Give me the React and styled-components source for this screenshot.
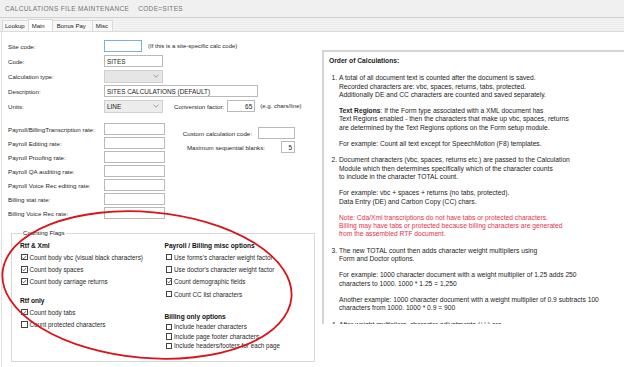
import { Fragment } from 'react';
import styled, { createGlobalStyle } from 'styled-components';

const GlobalStyle = createGlobalStyle`
  html, body {
    margin: 0;
    padding: 0;
    background: #ffffff;
  }
  body {
    font-family: "Liberation Sans", Arial, sans-serif;
    color: #1f1f1f;
  }
`

const Page = styled.div`
  position: relative;
  width: 624px;
  height: 367px;
  overflow: hidden;
  background: #ffffff;
`

const TitleBar = styled.div`
  display: flex;
  align-items: center;
  height: 17px;
  padding-left: 5px;
  background: #f0f0f0;
  border-bottom: 1px solid #d2d2d2;
  font-size: 6.5px;
  letter-spacing: 0.35px;
  color: #747474;
  text-transform: uppercase;
`

const TitleCode = styled.span`
  margin-left: 9px;
`

const TabStrip = styled.div`
  display: flex;
  align-items: flex-end;
  height: 13px;
  padding-left: 2px;
  background: repeating-linear-gradient(#ececec 0 1px, #f4f4f4 1px 2px);
  border-bottom: 1px solid #dcdcdc;
`

const Tab = styled.div`
  display: flex;
  align-items: center;
  height: ${p => (p.$active ? '11px' : '10px')};
  padding: 0 ${p => p.$pr}px 0 ${p => p.$pl}px;
  font-size: 6px;
  color: #222;
  background: ${p => (p.$active ? '#ffffff' : '#f7f7f7')};
  border: 1px solid #dadada;
  border-bottom: none;
  margin-right: -1px;
`

const Body = styled.div`
  display: flex;
  align-items: flex-start;
  margin-left: 1px;
  border-left: 1px solid #e2e2e2;
  height: 335px;
`

const LeftCol = styled.div`
  width: 308px;
  padding: 8px 0 0 6px;
  display: flex;
  flex-direction: column;
`

const FormGrid = styled.div`
  display: grid;
  grid-template-columns: 96px 1fr;
  grid-auto-rows: 12px;
  row-gap: 3px;
  align-items: center;
`

const Label = styled.label`
  font-size: 6.2px;
  color: #1f1f1f;
  white-space: nowrap;
  margin-left: ${p => p.$ml || 0}px;
`

const Controls = styled.div`
  display: flex;
  align-items: center;
  height: 12px;
`

const Input = styled.div`
  box-sizing: border-box;
  width: ${p => p.$w}px;
  height: 12px;
  margin-left: ${p => p.$ml || 0}px;
  border: 1px solid ${p => (p.$focus ? '#7aaee3' : '#b9b9b9')};
  background: #ffffff;
  font-size: 6.4px;
  color: #1b1b1b;
  display: flex;
  align-items: center;
  justify-content: ${p => (p.$right ? 'flex-end' : 'flex-start')};
  padding: 0 2px;
`

const Select = styled.div`
  box-sizing: border-box;
  width: ${p => p.$w}px;
  height: 13px;
  border: 1px solid #cfcfcf;
  background: ${p => (p.$disabled ? '#e6e6e6' : '#ececec')};
  font-size: 6.4px;
  color: #1b1b1b;
  display: flex;
  align-items: center;
  justify-content: space-between;
  padding: 0 3px 0 2px;
`

const Note = styled.span`
  font-size: 6px;
  color: #2a2a2a;
  margin-left: ${p => p.$ml}px;
  white-space: nowrap;
`

const Chevron = () => (
  <svg width="6" height="4" viewBox="0 0 6 4">
    <path d="M0.5 0.8 L3 3.2 L5.5 0.8" fill="none" stroke="#8a8a8a" strokeWidth="0.8" />
  </svg>
)

const PayrollSection = styled.div`
  display: flex;
  margin-top: 11px;
`

const PayrollGrid = styled(FormGrid)`
  row-gap: 2px;
`

const ExtraCol = styled.div`
  display: flex;
  flex-direction: column;
  align-items: flex-end;
  gap: 2px;
  width: 130px;
  margin-top: 4px;
`

const ExtraRow = styled.div`
  display: flex;
  align-items: center;
  height: 12px;
  gap: ${p => p.$gap}px;
`

const GroupBox = styled.fieldset`
  box-sizing: border-box;
  width: 304px;
  height: 133px;
  margin: 10px 0 0 3px;
  padding: 4px 0 0 8px;
  border: 1px solid #d8d8d8;
  display: flex;
  min-width: 0;
`

const Legend = styled.legend`
  font-size: 6.2px;
  line-height: 8px;
  padding: 0 1px;
  margin-left: 2px;
  color: #222;
`

const FlagCol = styled.div`
  display: flex;
  flex-direction: column;
  width: ${p => p.$w}px;
`

const FlagHeading = styled.div`
  font-size: 6.6px;
  font-weight: bold;
  height: 10px;
  line-height: 10px;
  margin-top: ${p => p.$mt || 0}px;
  color: #111;
  white-space: nowrap;
`

const FlagRow = styled.div`
  display: flex;
  align-items: center;
  height: ${p => p.$h}px;
  font-size: 6.3px;
  color: #1f1f1f;
  white-space: nowrap;
`

const Box = styled.span`
  box-sizing: border-box;
  width: 6.5px;
  height: 6.5px;
  border: 1px solid #444;
  background: #fff;
  margin: 0 2px 0 1px;
  display: flex;
  align-items: center;
  justify-content: center;
  flex-shrink: 0;
`

const Check = ({ on, h = 12.3, children }) => (
  <FlagRow $h={h}>
    <Box>
      {on && (
        <svg width="5" height="5" viewBox="0 0 5 5">
          <path d="M0.6 2.6 L1.9 3.9 L4.4 1" fill="none" stroke="#222" strokeWidth="0.8" />
        </svg>
      )}
    </Box>
    {children}
  </FlagRow>
)

const NotesPanel = styled.div`
  box-sizing: border-box;
  flex: 1;
  margin: 18px 0 0 6px;
  height: 274px;
  overflow: hidden;
  border-top: 2px solid #d4d4d4;
  border-left: 2px solid #d4d4d4;
  padding: 5px 0 0 5px;
  font-size: 6.7px;
  line-height: 8.3px;
  color: #1c1c1c;
  white-space: nowrap;
`

const NotesTitle = styled.div`
  font-weight: bold;
  margin-bottom: 9px;
`

const Steps = styled.ol`
  margin: 0;
  padding-left: 10px;
`

const Step = styled.li`
  margin-bottom: 8px;
`

const Para = styled.p`
  margin: 8px 0 0 0;
  color: ${p => (p.$red ? '#e5304d' : 'inherit')};
  &:first-child {
    margin-top: 0;
  }
`

const Overlay = styled.svg`
  position: absolute;
  left: 0;
  top: 0;
  pointer-events: none;
`

const formRows = [
  { label: 'Site code:', control: <><Input $w={38} $focus /><Note $ml={6}>(If this is a site-specific calc code)</Note></> },
  { label: 'Code:', control: <Input $w={59}>SITES</Input> },
  { label: 'Calculation type:', control: <Select $w={59} $disabled><span /><Chevron /></Select> },
  { label: 'Description:', control: <Input $w={154}>SITES CALCULATIONS (DEFAULT)</Input> },
  {
    label: 'Units:',
    control: (
      <>
        <Select $w={59}><span>LINE</span><Chevron /></Select>
        <Label $ml={11}>Conversion factor:</Label>
        <Input $w={28} $ml={3} $right>65</Input>
        <Note $ml={5}>(e.g. chars/line)</Note>
      </>
    ),
  },
]

const payrollRows = [
  'Payroll/BillingTranscription rate:',
  'Payroll Editing rate:',
  'Payroll Proofing rate:',
  'Payroll QA auditing rate:',
  'Payroll Voice Rec editing rate:',
  'Billing stat rate:',
  'Billing Voice Rec rate:',
]

export default function App() {
  return (
    <Page>
      <GlobalStyle />
      <TitleBar>
        Calculations File Maintenance
        <TitleCode>Code=SITES</TitleCode>
      </TitleBar>
      <TabStrip>
        <Tab $pl={2} $pr={3}>Lookup</Tab>
        <Tab $pl={3} $pr={7} $active>Main</Tab>
        <Tab $pl={4} $pr={6}>Bonus Pay</Tab>
        <Tab $pl={3} $pr={4}>Misc</Tab>
      </TabStrip>
      <Body>
        <LeftCol>
          <FormGrid>
            {formRows.map(r => (
              <Fragment key={r.label}>
                <Label>{r.label}</Label>
                <Controls>{r.control}</Controls>
              </Fragment>
            ))}
          </FormGrid>
          <PayrollSection>
            <PayrollGrid>
              {payrollRows.map(l => (
                <Fragment key={l}>
                  <Label>{l}</Label>
                  <Controls><Input $w={61} /></Controls>
                </Fragment>
              ))}
            </PayrollGrid>
            <ExtraCol>
              <ExtraRow $gap={6}>
                <Label>Custom calculation code:</Label>
                <Input $w={37} />
              </ExtraRow>
              <ExtraRow $gap={16}>
                <Label>Maximum sequential blanks:</Label>
                <Input $w={14} $right>5</Input>
              </ExtraRow>
            </ExtraCol>
          </PayrollSection>
          <GroupBox>
            <Legend>Counting Flags</Legend>
            <FlagCol $w={145}>
              <FlagHeading>Rtf &amp; Xml</FlagHeading>
              <Check on>Count body vbc (visual black characters)</Check>
              <Check on>Count body spaces</Check>
              <Check on>Count body carriage returns</Check>
              <FlagHeading $mt={8}>Rtf only</FlagHeading>
              <Check on>Count body tabs</Check>
              <Check>Count protected characters</Check>
            </FlagCol>
            <FlagCol $w={150}>
              <FlagHeading>Payroll / Billing misc options</FlagHeading>
              <Check>Use forms's character weight factor</Check>
              <Check>Use doctor's character weight factor</Check>
              <Check on>Count demographic fields</Check>
              <Check>Count CC list characters</Check>
              <FlagHeading $mt={12}>Billing only options</FlagHeading>
              <Check h={9.5}>Include header characters</Check>
              <Check h={9.5}>Include page footer characters</Check>
              <Check h={9.5}>Include headers/footers for each page</Check>
            </FlagCol>
          </GroupBox>
        </LeftCol>
        <NotesPanel>
          <NotesTitle>Order of Calculations:</NotesTitle>
          <Steps>
            <Step>
              <Para>
                A total of all document text is counted after the document is saved.<br />
                Recorded characters are: vbc, spaces, returns, tabs, protected.<br />
                Additionally DE and CC characters are counted and saved separately.
              </Para>
              <Para>
                <b>Text Regions</b>: If the Form type associated with a XML document has<br />
                Text Regions enabled - then the characters that make up vbc, spaces, returns<br />
                are determined by the Text Regions options on the Form setup module.
              </Para>
              <Para>For example: Count all text except for SpeechMotion (F8) templates.</Para>
            </Step>
            <Step>
              <Para>
                Document characters (vbc, spaces, returns etc.) are passed to the Calculation<br />
                Module which then determines specifically which of the character counts<br />
                to include in the character TOTAL count.
              </Para>
              <Para>
                For example: vbc + spaces + returns (no tabs, protected).<br />
                Data Entry (DE) and Carbon Copy (CC) chars.
              </Para>
              <Para $red>
                Note: Cda/Xml transcriptions do not have tabs or protected characters.<br />
                Billing may have tabs or protected because billing characters are generated<br />
                from the assembled RTF document.
              </Para>
            </Step>
            <Step>
              <Para>
                The new TOTAL count then adds character weight multipliers using<br />
                Form and Doctor options.
              </Para>
              <Para>
                For example: 1000 character document with a weight multiplier of 1.25 adds 250<br />
                characters to 1000. 1000 * 1.25 = 1,250
              </Para>
              <Para>
                Another example: 1000 character document with a weight multiplier of 0.9 subtracts 100<br />
                characters from 1000. 1000 * 0.9 = 900
              </Para>
            </Step>
            <Step>
              <Para>After weight multipliers, character adjustments (+/-) are</Para>
            </Step>
          </Steps>
        </NotesPanel>
      </Body>
      <Overlay width="624" height="367" viewBox="0 0 624 367">
        <ellipse
          cx="147"
          cy="285"
          rx="145"
          ry="73"
          transform="rotate(5 147 285)"
          fill="none"
          stroke="#d9141b"
          strokeWidth="1.8"
        />
      </Overlay>
    </Page>
  )
}
